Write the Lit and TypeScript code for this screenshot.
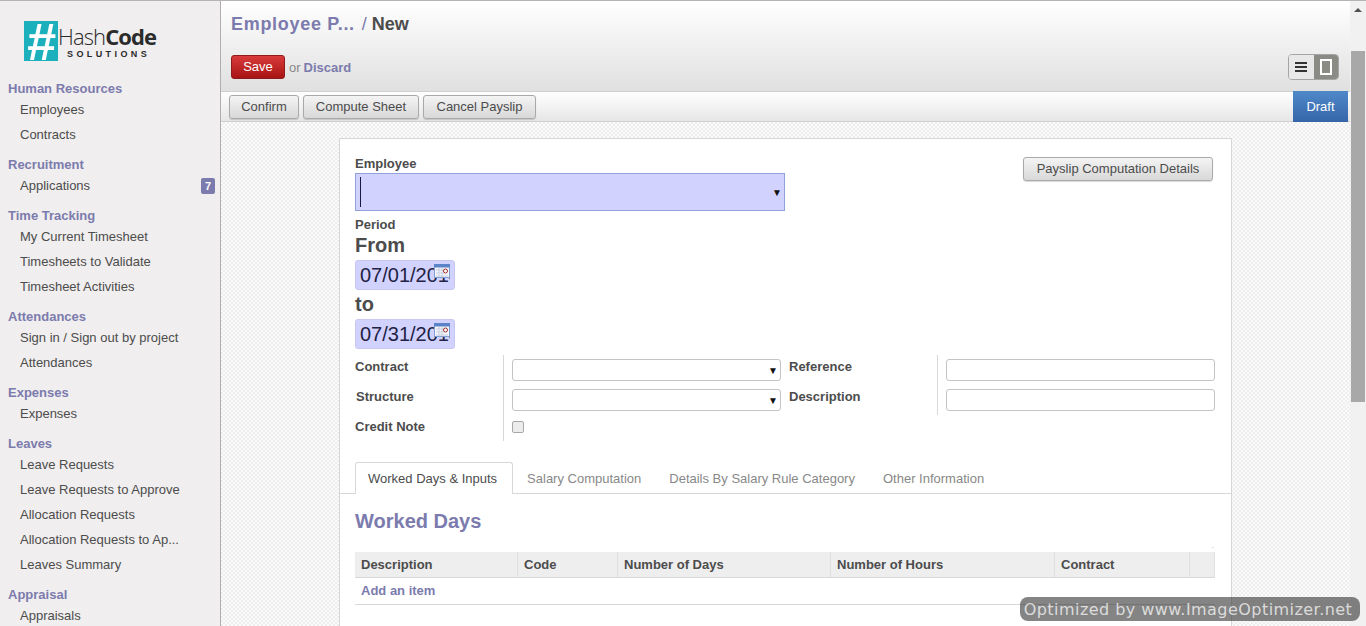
import { LitElement, html, css } from 'lit';
import { customElement } from 'lit/decorators.js';

// sidebar menu
const MENU = [
  { head: 'Human Resources', items: ['Employees', 'Contracts'] },
  { head: 'Recruitment', items: ['Applications'] },
  { head: 'Time Tracking', items: ['My Current Timesheet', 'Timesheets to Validate', 'Timesheet Activities'] },
  { head: 'Attendances', items: ['Sign in / Sign out by project', 'Attendances'] },
  { head: 'Expenses', items: ['Expenses'] },
  { head: 'Leaves', items: ['Leave Requests', 'Leave Requests to Approve', 'Allocation Requests', 'Allocation Requests to Ap...', 'Leaves Summary'] },
  { head: 'Appraisal', items: ['Appraisals'] },
];

const TABS = ['Worked Days & Inputs', 'Salary Computation', 'Details By Salary Rule Category', 'Other Information'];

const calendar = html`<svg class="cal" width="16" height="14" viewBox="0 0 16 14">
  <rect x="0.5" y="0.5" width="15" height="13" fill="#f4f6fb" stroke="#7f9dcf"/>
  <rect x="0" y="0" width="16" height="3.5" fill="#5b84c8"/>
  <path d="M2 6h8M2 9h8M2 12h12M5 4v9M8 4v9" stroke="#c9cfe0" stroke-width="1"/>
  <circle cx="11.5" cy="7" r="2" fill="#fff" stroke="#9c2a2a"/>
</svg>`;

@customElement('app-root')
export class AppRoot extends LitElement {
  static styles = css`
    :host {
      display: flex;
      height: 626px;
      overflow: hidden;
      position: relative;
      font-family: "Liberation Sans", Arial, sans-serif;
      font-size: 13px;
      color: #4c4c4c;
      border-top: 1px solid #b4b4b4;
      box-sizing: border-box;
    }
    .side {
      flex: 0 0 220px;
      background: #f0eeee;
      border-right: 1px solid #afafb0;
      overflow: hidden;
    }
    .logo {
      display: flex;
      height: 59px;
      margin: 20px 0 0 24px;
    }
    .logo-mark {
      width: 34px;
      height: 40px;
      background: #1cb0bc;
      color: #fff;
      font: italic 700 52px/42px "Liberation Sans", sans-serif;
      text-align: center;
      white-space: nowrap;
    }
    .logo-text {
      color: #2b2b2b;
      line-height: 1;
    }
    .logo-name {
      font: 300 22px/30px "Open Sans", sans-serif;
      letter-spacing: -0.9px;
    }
    .logo-name b {
      font-weight: 700;
    }
    .logo-sub {
      font: 700 9px/9px "Liberation Sans", sans-serif;
      letter-spacing: 3.4px;
      margin: -1px 0 0 9px;
    }
    .group {
      padding-bottom: 9px;
    }
    .head {
      color: #7c7bad;
      font-weight: 700;
      font-size: 13px;
      line-height: 18px;
      padding-left: 8px;
      height: 17px;
    }
    .item {
      display: flex;
      justify-content: space-between;
      align-items: center;
      height: 25px;
      padding: 0 5px 0 20px;
      color: #4c4c4c;
    }
    .badge {
      background: #7c7bad;
      color: #fff;
      font-size: 11px;
      font-weight: 700;
      width: 14px;
      height: 16px;
      line-height: 16px;
      text-align: center;
      border-radius: 2px;
    }
    .main {
      flex: 1;
      min-width: 0;
      display: flex;
      flex-direction: column;
    }
    .top {
      height: 90px;
      box-sizing: border-box;
      background: linear-gradient(#fff, #e0e0e0);
      padding: 12px 11px 0 10px;
    }
    .crumbs {
      font-size: 18px;
      line-height: 22px;
      font-weight: 700;
      color: #4c4c4c;
    }
    .crumbs a {
      color: #7c7bad;
      letter-spacing: 0.7px;
    }
    .crumbs span {
      color: #7c7bad;
      font-weight: 400;
      margin-left: 2px;
    }
    .actions {
      display: flex;
      align-items: center;
      justify-content: space-between;
      margin-top: 19px;
    }
    .save-line {
      display: flex;
      align-items: center;
      gap: 4px;
      color: #888;
    }
    .save {
      width: 54px;
      height: 24px;
      box-sizing: border-box;
      line-height: 22px;
      text-align: center;
      color: #fff;
      background: linear-gradient(#d93a3a, #a81414);
      border: 1px solid #8e1a1a;
      border-radius: 3px;
    }
    .discard {
      color: #7c7bad;
      font-weight: 700;
      margin-left: -1px;
    }
    .switch {
      display: flex;
      width: 51px;
      height: 26px;
      box-sizing: border-box;
      border: 1px solid #a5a5a5;
      border-radius: 4px;
      overflow: hidden;
    }
    .switch div {
      flex: 1;
      display: flex;
      align-items: center;
      justify-content: center;
      background: #e8e8e8;
    }
    .switch div + div {
      background: #8b8b86;
    }
    .toolbar {
      height: 31px;
      box-sizing: border-box;
      display: flex;
      align-items: center;
      justify-content: space-between;
      padding: 0 2px 0 8px;
      background: linear-gradient(#fff, #e6e6e6);
      border-top: 1px solid #d0d0d0;
      border-bottom: 1px solid #cfcfcf;
    }
    .btns {
      display: grid;
      grid-template-columns: 70px 116px 113px;
      gap: 4px;
      text-align: center;
    }
    .btn {
      height: 24px;
      box-sizing: border-box;
      line-height: 22px;
      color: #4c4c4c;
      background: linear-gradient(#f4f4f4, #d8d8d8);
      border: 1px solid #a9a9a9;
      border-radius: 3px;
      box-shadow: 0 1px 1px rgba(0, 0, 0, 0.15);
    }
    .draft {
      align-self: stretch;
      width: 55px;
      margin: -1px 0;
      line-height: 31px;
      text-align: center;
      color: #fff;
      background: linear-gradient(#4f89c9, #3565a8);
    }
    .content {
      flex: 1;
      min-height: 0;
      padding-top: 16px;
      background-color: #f7f7f7;
      background-image: conic-gradient(#eeeeee 25%, #fbfbfb 0 50%, #eeeeee 0 75%, #fbfbfb 0);
      background-size: 4px 4px;
    }
    .sheet {
      width: 893px;
      height: 600px;
      box-sizing: border-box;
      margin: 0 auto;
      background: #fff;
      border: 1px solid #d6d6d6;
      padding: 17px 15px 0;
    }
    .upper {
      display: flex;
      justify-content: space-between;
      align-items: flex-start;
    }
    .lbl {
      font-weight: 700;
      line-height: 16px;
    }
    .emp-lbl {
      margin-bottom: 1px;
    }
    .emp {
      width: 430px;
      height: 38px;
      box-sizing: border-box;
      display: flex;
      align-items: center;
      justify-content: space-between;
      background: #d2d2ff;
      border: 1px solid #8fa3d8;
      padding: 3px 2px 3px 4px;
    }
    .cursor {
      width: 1px;
      height: 100%;
      background: #1a1a4a;
    }
    .arrow {
      font-size: 10px;
      color: #111;
    }
    .period {
      margin-top: 6px;
    }
    .big {
      font-size: 20px;
      font-weight: 700;
      line-height: 24px;
      color: #4c4c4c;
    }
    .from {
      margin-bottom: 3px;
    }
    .to {
      margin: 2px 0 3px;
    }
    .date {
      width: 100px;
      height: 30px;
      box-sizing: border-box;
      background: #d2d2ff;
      border-radius: 3px;
      border: 1px solid #c6c6ee;
      padding-left: 4px;
      position: relative;
      font-size: 20px;
      line-height: 28px;
      color: #222244;
    }
    .date span {
      display: block;
      width: 90px;
      overflow: hidden;
      white-space: nowrap;
    }
    .cal {
      position: absolute;
      top: 3px;
      right: 4px;
    }
    .calc {
      width: 190px;
      margin: 1px 3px 0 0;
      text-align: center;
    }
    .fields {
      display: grid;
      grid-template-columns: 148px 286px 148px 278px;
      margin-top: 6px;
    }
    .fields > .lbl {
      height: 30px;
      line-height: 24px;
    }
    .cell {
      border-left: 1px solid #d8d8d8;
      padding: 4px 0 0 8px;
      height: 30px;
      box-sizing: border-box;
    }
    .fields > .last {
      height: 26px;
    }
    .sel {
      width: 269px;
      height: 22px;
      box-sizing: border-box;
      display: flex;
      align-items: center;
      justify-content: flex-end;
      padding-right: 2px;
      background: #fff;
      border: 1px solid #c4c4c4;
      border-radius: 3px;
    }
    .shift {
      padding-left: 1px;
    }
    .check {
      width: 12px;
      height: 12px;
      box-sizing: border-box;
      margin-top: 2px;
      background: #ececec;
      border: 1px solid #a8a8a8;
      border-radius: 2px;
    }
    .tabs {
      display: flex;
      height: 31px;
      margin: 21px -15px 0;
      padding-left: 15px;
      border-bottom: 1px solid #d8d8d8;
    }
    .tab {
      padding: 1px 14px 0;
      line-height: 32px;
      color: #888;
    }
    .tab.on {
      padding: 0 15px 0 12px;
      color: #4c4c4c;
      background: #fff;
      border: 1px solid #d8d8d8;
      border-bottom: 0;
      border-radius: 3px 3px 0 0;
      height: 32px;
      box-sizing: border-box;
    }
    h2 {
      margin: 15px 0 0;
      font-size: 20px;
      line-height: 24px;
      color: #7c7bad;
    }
    .dot {
      height: 19px;
      text-align: right;
      padding-right: 2px;
      font-size: 8px;
      line-height: 26px;
      color: #999;
    }
    .thead {
      display: grid;
      grid-template-columns: 163px 100px 213px 224px 135px 25px;
      background: #eeeeee;
      border-bottom: 1px solid #d8d8d8;
      width: 860px;
      height: 26px;
      box-sizing: border-box;
    }
    .thead div {
      padding-left: 6px;
      font-weight: 700;
      line-height: 25px;
      border-right: 1px solid #dfdfdf;
      box-sizing: border-box;
    }
    .add {
      width: 860px;
      height: 27px;
      box-sizing: border-box;
      padding-left: 6px;
      line-height: 25px;
      font-weight: 700;
      color: #7c7bad;
      border-bottom: 1px solid #d8d8d8;
    }
    .bar {
      flex: 0 0 16px;
      background: #f1f1f1;
      display: flex;
      flex-direction: column;
      align-items: center;
    }
    .up {
      margin-top: 7px;
      width: 0;
      height: 0;
      border: 4px solid transparent;
      border-top: 0;
      border-bottom-color: #505050;
    }
    .thumb {
      width: 14px;
      height: 351px;
      margin-top: 39px;
      background: #a8a8a8;
    }
    .mark {
      position: absolute;
      left: 1020px;
      top: 596px;
      width: 336px;
      height: 24px;
      padding-right: 4px;
      border-radius: 8px;
      background: rgba(50, 50, 50, 0.6);
      color: rgba(255, 255, 255, 0.72);
      font: 16px/25px "DejaVu Sans", sans-serif;
      letter-spacing: 0.45px;
      text-align: center;
      white-space: nowrap;
    }
  `;

  render() {
    return html`
      <aside class="side">
        <div class="logo">
          <div class="logo-mark">#</div>
          <div class="logo-text">
            <div class="logo-name">Hash<b>Code</b></div>
            <div class="logo-sub">SOLUTIONS</div>
          </div>
        </div>
        ${MENU.map((g) => html`
          <div class="group">
            <div class="head">${g.head}</div>
            ${g.items.map((i) => html`
              <div class="item">
                <span>${i}</span>
                ${i === 'Applications' ? html`<span class="badge">7</span>` : ''}
              </div>`)}
          </div>`)}
      </aside>
      <div class="main">
        <div class="top">
          <div class="crumbs"><a>Employee P...</a><span> / </span>New</div>
          <div class="actions">
            <div class="save-line">
              <div class="save">Save</div>
              <span>or</span>
              <span class="discard">Discard</span>
            </div>
            <div class="switch">
              <div>
                <svg width="14" height="12" viewBox="0 0 14 12"><path d="M1 2h12M1 6h12M1 10h12" stroke="#333" stroke-width="2"/></svg>
              </div>
              <div>
                <svg width="12" height="16" viewBox="0 0 12 16"><rect x="1" y="1" width="10" height="14" fill="none" stroke="#fff" stroke-width="2"/></svg>
              </div>
            </div>
          </div>
        </div>
        <div class="toolbar">
          <div class="btns">
            <div class="btn">Confirm</div>
            <div class="btn">Compute Sheet</div>
            <div class="btn">Cancel Payslip</div>
          </div>
          <div class="draft">Draft</div>
        </div>
        <div class="content">
          <div class="sheet">
            <div class="upper">
              <div>
                <div class="lbl emp-lbl">Employee</div>
                <div class="emp"><div class="cursor"></div><span class="arrow">▼</span></div>
                <div class="lbl period">Period</div>
                <div class="big from">From</div>
                <div class="date"><span>07/01/2014</span>${calendar}</div>
                <div class="big to">to</div>
                <div class="date"><span>07/31/2014</span>${calendar}</div>
              </div>
              <div class="btn calc">Payslip Computation Details</div>
            </div>
            <div class="fields">
              <div class="lbl">Contract</div>
              <div class="cell"><div class="sel"><span class="arrow">▼</span></div></div>
              <div class="lbl">Reference</div>
              <div class="cell"><div class="sel"></div></div>
              <div class="lbl shift">Structure</div>
              <div class="cell"><div class="sel"><span class="arrow">▼</span></div></div>
              <div class="lbl">Description</div>
              <div class="cell"><div class="sel"></div></div>
              <div class="lbl last">Credit Note</div>
              <div class="cell last"><div class="check"></div></div>
            </div>
            <div class="tabs">
              ${TABS.map((t, i) => html`<div class="tab ${i === 0 ? 'on' : ''}">${t}</div>`)}
            </div>
            <h2>Worked Days</h2>
            <div class="dot">.</div>
            <div class="thead">
              <div>Description</div>
              <div>Code</div>
              <div>Number of Days</div>
              <div>Number of Hours</div>
              <div>Contract</div>
              <div></div>
            </div>
            <div class="add">Add an item</div>
          </div>
        </div>
      </div>
      <div class="bar">
        <div class="up"></div>
        <div class="thumb"></div>
      </div>
      <div class="mark">Optimized by www.ImageOptimizer.net</div>
    `;
  }
}
